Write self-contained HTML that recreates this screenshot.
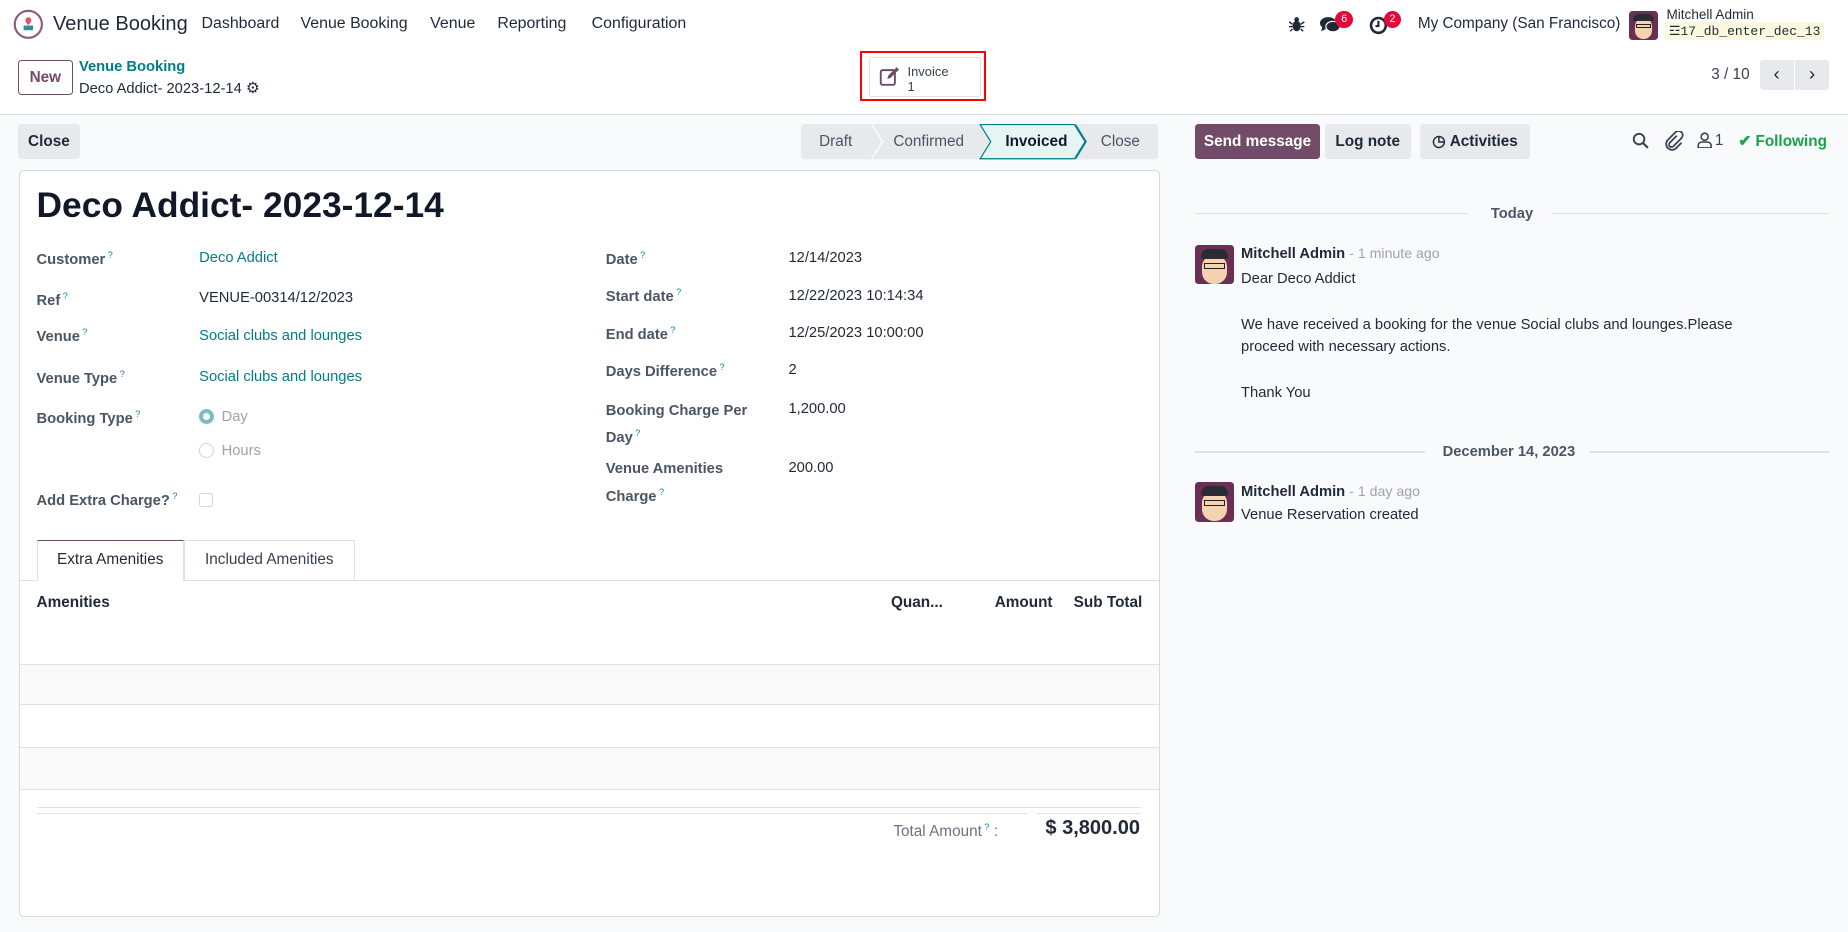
<!DOCTYPE html>
<html><head><meta charset="utf-8"><style>
*{box-sizing:border-box;margin:0;padding:0}
html,body{width:1848px;height:932px;overflow:hidden;background:#fff}
#w{zoom:1.178571;width:1568px;height:791px;position:relative;font-family:"Liberation Sans",sans-serif;font-size:12.5px;color:#374151}
.a{position:absolute;white-space:nowrap}
.nav{font-size:13.5px;color:#1f2937}
.gray{background:#f9fafb}
.btn{position:absolute;border-radius:3px;background:#e7e9ed;color:#1f2937;font-weight:bold;text-align:center;line-height:30px;font-size:13px}
.lbl{position:absolute;font-weight:bold;color:#4b5563;font-size:12.5px}
.val{position:absolute;color:#1f2937;font-size:12.5px}
.lnk{color:#017e84}
sup{color:#0a8ca0;font-size:8px;font-weight:normal;margin-left:2px}
.badge{position:absolute;background:#e4093a;color:#fff;border-radius:8px;font-size:9px;width:15px;height:15px;text-align:center;line-height:15px}
.hr{position:absolute;height:1px;background:#dee2e6}
</style></head><body><div id="w">
<svg class="a" style="left:11px;top:8px" width="26" height="26" viewBox="0 0 26 26"><circle cx="13" cy="13" r="11.5" fill="#fff" stroke="#8a5a7d" stroke-width="1.8"/><path d="M13 7a2.5 2.5 0 0 1 2.5 2.5c0 2-2.5 4-2.5 4s-2.5-2-2.5-4A2.5 2.5 0 0 1 13 7z" fill="#e4506b"/><rect x="9" y="14" width="8" height="4" fill="#3a8a9a"/></svg>
<div class="a" style="left:45px;top:11px;font-size:17px;color:#1f2937">Venue Booking</div>
<div class="a nav" style="left:171px;top:13px">Dashboard</div>
<div class="a nav" style="left:255px;top:13px">Venue Booking</div>
<div class="a nav" style="left:365px;top:13px">Venue</div>
<div class="a nav" style="left:422px;top:13px">Reporting</div>
<div class="a nav" style="left:502px;top:13px">Configuration</div>
<svg class="a" style="left:1094px;top:14px" width="13" height="14" viewBox="0 0 13 14"><ellipse cx="6.5" cy="8.5" rx="3.5" ry="4.5" fill="#1f2937"/><circle cx="6.5" cy="3" r="2" fill="#1f2937"/><path d="M0 5l3 2M13 5l-3 2M0 9h3M13 9h-3M1 13l2-2M12 13l-2-2" stroke="#1f2937" stroke-width="1.2"/></svg>
<svg class="a" style="left:1120px;top:14px" width="18" height="16" viewBox="0 0 18 16"><ellipse cx="7" cy="6" rx="7" ry="5" fill="#1f2937"/><path d="M2 9l-1 4 4-2z" fill="#1f2937"/><ellipse cx="11" cy="9" rx="6" ry="4.5" fill="#1f2937" stroke="#fff" stroke-width="1"/></svg>
<div class="badge" style="left:1133px;top:9px">6</div>
<svg class="a" style="left:1162px;top:14px" width="16" height="16" viewBox="0 0 16 16"><circle cx="8" cy="8" r="6.3" fill="none" stroke="#1f2937" stroke-width="2.2"/><path d="M8 4v4.5h-2.5" stroke="#1f2937" stroke-width="1.8" fill="none"/></svg>
<div class="badge" style="left:1174px;top:9px">2</div>
<div class="a nav" style="left:1203px;top:13px;font-size:13px">My Company (San Francisco)</div>
<div class="a" style="left:1382px;top:9px;width:25px;height:25px;border-radius:3px;background:#6b2f55;overflow:hidden"><div style="position:absolute;left:5px;top:6px;width:15px;height:18px;border-radius:7px;background:#f6d3b0"></div><div style="position:absolute;left:4px;top:3px;width:17px;height:6px;border-radius:5px 5px 1px 1px;background:#2b2b33"></div><div style="position:absolute;left:6px;top:11px;width:13px;height:4px;border:1px solid #222"></div></div>
<div class="a" style="left:1414px;top:6px;font-size:11.5px;color:#1f2937">Mitchell Admin</div>
<div class="a" style="left:1413px;top:19px;font-family:'Liberation Mono',monospace;font-size:11px;background:#fbf9dd;padding:1px 3px;color:#1f2937">&#9778;17_db_enter_dec_13</div>
<div class="a" style="left:15px;top:51px;width:47px;height:30px;border:1px solid #714b67;border-radius:3px;color:#714b67;font-weight:bold;font-size:13px;text-align:center;line-height:28px">New</div>
<div class="a" style="left:67px;top:50px;color:#017e84;font-weight:bold;font-size:12.5px">Venue Booking</div>
<div class="a" style="left:67px;top:67px;color:#1f2937;font-size:12.5px">Deco Addict- 2023-12-14 <span style="font-size:13px">&#9881;</span></div>
<div class="a" style="left:730px;top:43px;width:107px;height:43px;border:2px solid #f00"></div>
<div class="a" style="left:737px;top:48px;width:95px;height:34px;border:1px solid #dee2e6;border-radius:2px;background:#fff"></div>
<svg class="a" style="left:746px;top:56px" width="18" height="18" viewBox="0 0 18 18"><rect x="1.5" y="3.5" width="12" height="12.5" rx="1.5" fill="none" stroke="#714b67" stroke-width="1.6"/><path d="M7 11l1-3 7-7 2 2-7 7z" fill="#714b67"/></svg>
<div class="a" style="left:770px;top:54px;font-size:11px;color:#374151;line-height:13px">Invoice<br>1</div>
<div class="a" style="left:1452px;top:56px;font-size:13px;color:#374151">3 / 10</div>
<div class="btn" style="left:1493px;top:51px;width:29px;height:25px;border-radius:3px 0 0 3px;font-size:16px;font-weight:normal;line-height:24px">&#8249;</div>
<div class="btn" style="left:1523px;top:51px;width:29px;height:25px;border-radius:0 3px 3px 0;font-size:16px;font-weight:normal;line-height:24px">&#8250;</div>
<div class="hr" style="left:0;top:97px;width:1568px;background:#d8dadd"></div>
<div class="a gray" style="left:0;top:98px;width:1568px;height:693px"></div>
<div class="btn" style="left:15px;top:105px;width:53px;height:30px">Close</div>
<svg class="a" style="left:680px;top:105px" width="304" height="31" viewBox="0 0 304 31"><rect x="0" y="0" width="303" height="30" rx="3" fill="#e7e9ed"/><path d="M60 0l9 15-9 15" stroke="#fff" stroke-width="1" fill="none"/><path d="M152 0.5h80l9 14.5-9 14.5h-80l9-14.5z" fill="#e6f4f4" stroke="#017e84" stroke-width="1"/><path d="M233 0.5l9 14.5-9 14.5" stroke="#017e84" fill="none"/></svg>
<div class="a" style="left:695px;top:113px;color:#4b5563;font-size:13px">Draft</div>
<div class="a" style="left:758px;top:113px;color:#4b5563;font-size:13px">Confirmed</div>
<div class="a" style="left:853px;top:113px;color:#111827;font-size:13px;font-weight:bold">Invoiced</div>
<div class="a" style="left:934px;top:113px;color:#4b5563;font-size:13px">Close</div>
<div class="btn" style="left:1014px;top:105px;width:106px;height:30px;background:#714b67;color:#fff">Send message</div>
<div class="btn" style="left:1124px;top:105px;width:73px;height:30px">Log note</div>
<div class="btn" style="left:1205px;top:105px;width:93px;height:30px">&#9719;&nbsp;Activities</div>
<svg class="a" style="left:1385px;top:112px" width="15" height="15" viewBox="0 0 15 15"><circle cx="6" cy="6" r="4.5" fill="none" stroke="#374151" stroke-width="1.6"/><path d="M9.5 9.5l4 4" stroke="#374151" stroke-width="1.8"/></svg>
<svg class="a" style="left:1413px;top:111px" width="16" height="17" viewBox="0 0 16 17"><path d="M10 4l-6 6a2 2 0 0 0 3 3l7-7a3.5 3.5 0 0 0-5-5l-7 7a5 5 0 0 0 7 7l5-5" fill="none" stroke="#374151" stroke-width="1.5"/></svg>
<svg class="a" style="left:1440px;top:112px" width="13" height="14" viewBox="0 0 13 14"><circle cx="6.5" cy="4" r="3" fill="none" stroke="#374151" stroke-width="1.3"/><path d="M1 13.5v-2a3 3 0 0 1 3-3h5a3 3 0 0 1 3 3v2z" fill="none" stroke="#374151" stroke-width="1.3"/></svg>
<div class="a" style="left:1455px;top:112px;font-size:13px">1</div>
<div class="a" style="left:1475px;top:112px;font-size:13px;color:#16a34a;font-weight:bold">&#10004; Following</div>
<div class="a" style="left:16px;top:144px;width:968px;height:634px;background:#fff;border:1px solid #d8dadd;border-radius:4px"></div>
<div class="a" style="left:31px;top:158px;font-size:30px;font-weight:bold;color:#111827">Deco Addict- 2023-12-14</div>
<div class="lbl" style="left:31px;top:211px">Customer<sup>?</sup></div><div class="val lnk" style="left:169px;top:212px">Deco Addict</div>
<div class="lbl" style="left:31px;top:246px">Ref<sup>?</sup></div><div class="val" style="left:169px;top:246px">VENUE-00314/12/2023</div>
<div class="lbl" style="left:31px;top:277px">Venue<sup>?</sup></div><div class="val lnk" style="left:169px;top:278px">Social clubs and lounges</div>
<div class="lbl" style="left:31px;top:312px">Venue Type<sup>?</sup></div><div class="val lnk" style="left:169px;top:313px">Social clubs and lounges</div>
<div class="lbl" style="left:31px;top:346px">Booking Type<sup>?</sup></div>
<div class="a" style="left:169px;top:347px;width:13px;height:13px;border-radius:50%;border:4px solid #7bbcbf"></div><div class="val" style="left:188px;top:347px;color:#9ca3af">Day</div>
<div class="a" style="left:169px;top:376px;width:13px;height:13px;border-radius:50%;border:1px solid #d1d5db"></div><div class="val" style="left:188px;top:376px;color:#9ca3af">Hours</div>
<div class="lbl" style="left:31px;top:416px">Add Extra Charge?<sup>?</sup></div>
<div class="a" style="left:169px;top:418px;width:12px;height:12px;border:1px solid #d1d5db;border-radius:2px"></div>
<div class="lbl" style="left:514px;top:211px">Date<sup>?</sup></div><div class="val" style="left:669px;top:212px">12/14/2023</div>
<div class="lbl" style="left:514px;top:243px">Start date<sup>?</sup></div><div class="val" style="left:669px;top:244px">12/22/2023 10:14:34</div>
<div class="lbl" style="left:514px;top:275px">End date<sup>?</sup></div><div class="val" style="left:669px;top:276px">12/25/2023 10:00:00</div>
<div class="lbl" style="left:514px;top:306px">Days Difference<sup>?</sup></div><div class="val" style="left:669px;top:307px">2</div>
<div class="lbl" style="left:514px;top:339px;line-height:19px">Booking Charge Per<br>Day<sup>?</sup></div><div class="val" style="left:669px;top:340px">1,200.00</div>
<div class="lbl" style="left:514px;top:389px;line-height:19px">Venue Amenities<br>Charge<sup>?</sup></div><div class="val" style="left:669px;top:390px">200.00</div>
<div class="hr" style="left:17px;top:492px;width:966px"></div>
<div class="a" style="left:31px;top:458px;width:125px;height:35px;background:#fff;border:1px solid #dee2e6;border-top:1px solid #714b67;border-bottom:none;text-align:center;line-height:33px;color:#1f2937;font-size:13px">Extra Amenities</div>
<div class="a" style="left:156px;top:458px;width:145px;height:34px;border:1px solid #dee2e6;border-bottom:none;text-align:center;line-height:33px;color:#374151;font-size:13px">Included Amenities</div>
<div class="a" style="left:31px;top:504px;font-weight:bold;color:#1f2937;font-size:13px">Amenities</div>
<div class="a" style="left:756px;top:504px;font-weight:bold;color:#1f2937;font-size:13px">Quan...</div>
<div class="a" style="left:844px;top:504px;font-weight:bold;color:#1f2937;font-size:13px">Amount</div>
<div class="a" style="left:911px;top:504px;font-weight:bold;color:#1f2937;font-size:13px">Sub Total</div>
<div class="a" style="left:17px;top:563px;width:966px;height:35px;background:#fafafa;border-top:1px solid #dee2e6;border-bottom:1px solid #dee2e6"></div>
<div class="a" style="left:17px;top:634px;width:966px;height:36px;background:#fafafa;border-top:1px solid #dee2e6;border-bottom:1px solid #dee2e6"></div>
<div class="hr" style="left:31px;top:685px;width:937px"></div>
<div class="hr" style="left:31px;top:690px;width:840px"></div>
<div class="hr" style="left:880px;top:690px;width:88px"></div>
<div class="a" style="left:758px;top:697px;color:#6b7280;font-size:13px">Total Amount<sup>?</sup> :</div>
<div class="a" style="left:887px;top:693px;color:#1f2937;font-size:17px;font-weight:bold">$ 3,800.00</div>
<div class="hr" style="left:1014px;top:181px;width:232px"></div>
<div class="a" style="left:1265px;top:175px;font-weight:bold;color:#4b5563;font-size:12.5px">Today</div>
<div class="hr" style="left:1316px;top:181px;width:236px"></div>
<div class="hr" style="left:1014px;top:383px;width:195px"></div>
<div class="a" style="left:1224px;top:377px;font-weight:bold;color:#4b5563;font-size:12.5px">December 14, 2023</div>
<div class="hr" style="left:1349px;top:383px;width:203px"></div>
<div class="a" style="left:1014px;top:208px;width:33px;height:33px;border-radius:3px;background:#6b2f55;overflow:hidden"><div style="position:absolute;left:6px;top:8px;width:21px;height:25px;border-radius:10px;background:#f6d3b0"></div><div style="position:absolute;left:5px;top:3px;width:23px;height:9px;border-radius:7px 7px 2px 2px;background:#2b2b33"></div><div style="position:absolute;left:8px;top:15px;width:17px;height:5px;border:1.5px solid #222"></div></div>
<div class="a" style="left:1014px;top:409px;width:33px;height:34px;border-radius:3px;background:#6b2f55;overflow:hidden"><div style="position:absolute;left:6px;top:8px;width:21px;height:25px;border-radius:10px;background:#f6d3b0"></div><div style="position:absolute;left:5px;top:3px;width:23px;height:9px;border-radius:7px 7px 2px 2px;background:#2b2b33"></div><div style="position:absolute;left:8px;top:15px;width:17px;height:5px;border:1.5px solid #222"></div></div>
<div class="a" style="left:1053px;top:208px;font-size:12.5px"><b style="color:#1f2937">Mitchell Admin</b> <span style="color:#9ca3af;font-size:12px">- 1 minute ago</span></div>
<div class="a" style="left:1053px;top:227px;color:#1f2937;line-height:19.5px">Dear Deco Addict<br><br>We have received a booking for the venue Social clubs and lounges.Please<br>proceed with necessary actions.<br><br>Thank You</div>
<div class="a" style="left:1053px;top:410px;font-size:12.5px"><b style="color:#1f2937">Mitchell Admin</b> <span style="color:#9ca3af;font-size:12px">- 1 day ago</span></div>
<div class="a" style="left:1053px;top:430px;color:#1f2937">Venue Reservation created</div>
</div></body></html>
